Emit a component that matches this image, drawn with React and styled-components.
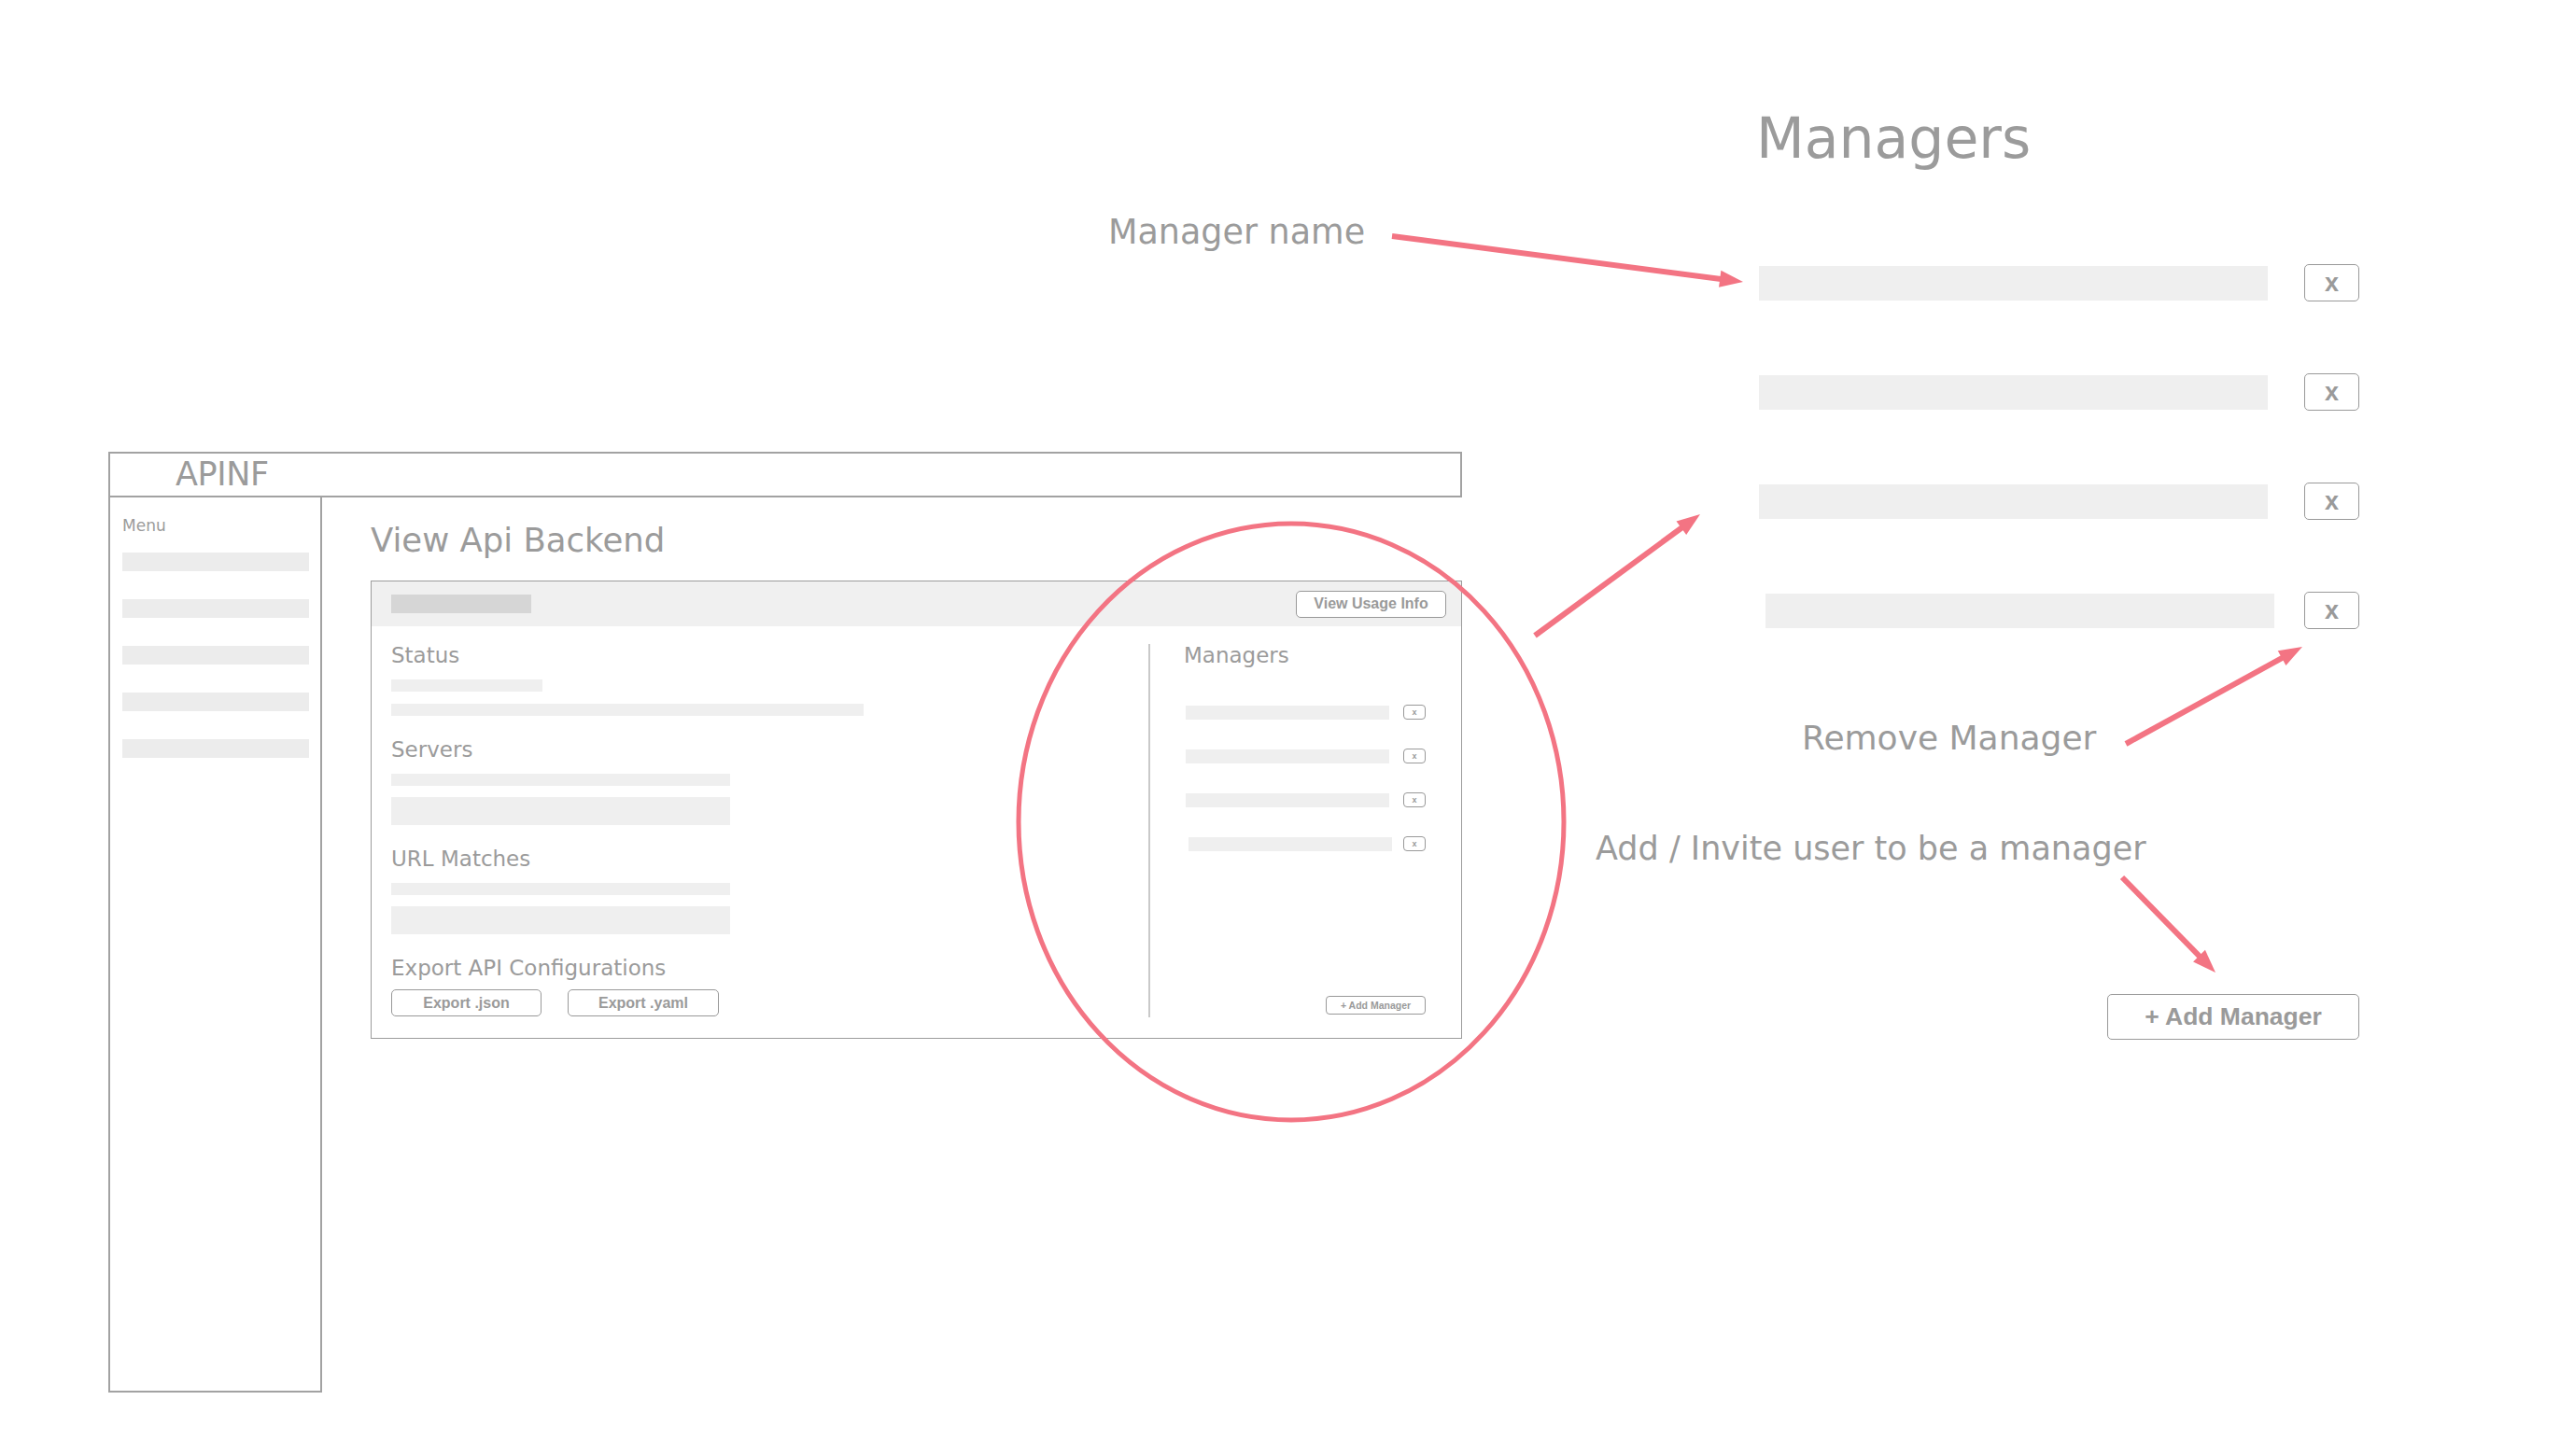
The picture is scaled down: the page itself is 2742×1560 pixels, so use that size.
import React from "react";
import styled, { createGlobalStyle } from "styled-components";

const PINK = "#f37483";
const INK = "#9b9b9b";
const LINE = "#a2a2a2";
const FILL = "#efefef";

const GlobalStyle = createGlobalStyle`
  html, body { margin: 0; padding: 0; background: #ffffff; }
  body { font-family: "DejaVu Sans", "Liberation Sans", sans-serif; color: ${INK}; }
  *, *::before, *::after { box-sizing: border-box; }
`;

const Canvas = styled.div`
  position: relative;
  width: 2742px;
  height: 1560px;
  overflow: hidden;
  display: flex;
  align-items: flex-start;
  padding-left: 116px;
  background: #fff;
`;

/* ---------- wireframe (left) ---------- */
const Wireframe = styled.section`
  width: 1450px;
  margin-top: 484px;
  display: flex;
  flex-direction: column;
`;

const TopBar = styled.header`
  height: 49px;
  border: 2px solid ${LINE};
  display: flex;
  align-items: center;
  padding-left: 70px;
`;

const Brand = styled.span`
  font-size: 35px;
  line-height: 45px;
  color: ${INK};
  letter-spacing: -0.4px;
`;

const Frame = styled.div`
  display: flex;
  align-items: flex-start;
`;

const Sidebar = styled.nav`
  width: 229px;
  height: 959px;
  border: 2px solid ${LINE};
  border-top: none;
  padding: 20px 0 0 13px;
  display: flex;
  flex-direction: column;
`;

const MenuLabel = styled.div`
  font-size: 17px;
  line-height: 20px;
  margin-bottom: 19px;
`;

const MenuItems = styled.div`
  display: flex;
  flex-direction: column;
  gap: 30px;
`;

const MenuItem = styled.div`
  width: 200px;
  height: 20px;
  background: #ececec;
`;

const Main = styled.main`
  flex: 1;
  padding: 26px 0 0 52px;
`;

const PageTitle = styled.h1`
  margin: 0 0 23px;
  font-weight: normal;
  font-size: 35.5px;
  line-height: 40px;
  color: ${INK};
`;

const Card = styled.div`
  border: 1px solid #9c9c9c;
  display: flex;
  flex-direction: column;
`;

const CardHead = styled.div`
  height: 48px;
  background: #f0f0f0;
  display: flex;
  align-items: center;
  justify-content: space-between;
  padding: 0 16px 0 21px;
`;

const HeadPlaceholder = styled.div`
  width: 150px;
  height: 20px;
  background: #d6d6d6;
`;

const Button = styled.button`
  width: ${(p) => p.$w}px;
  height: ${(p) => p.$h}px;
  padding: 0;
  background: #fff;
  border: 1px solid #999;
  border-radius: ${(p) => p.$r || 4}px;
  font-family: "Liberation Sans", Arial, sans-serif;
  font-weight: bold;
  font-size: ${(p) => p.$fs}px;
  color: #9a9a9a;
  display: flex;
  align-items: center;
  justify-content: center;
  white-space: nowrap;
  cursor: pointer;
`;

const CardBody = styled.div`
  display: flex;
  align-items: stretch;
`;

const LeftCol = styled.div`
  flex: 1;
  padding: 17px 0 23px 21px;
  display: flex;
  flex-direction: column;
`;

const Section = styled.div`
  display: flex;
  flex-direction: column;
  margin-top: ${(p) => (p.$first ? 0 : 22)}px;
`;

const SectionTitle = styled.h3`
  margin: 0 0 12px;
  font-weight: normal;
  font-size: 23px;
  line-height: 28px;
  color: ${INK};
`;

const Bars = styled.div`
  display: flex;
  flex-direction: column;
  gap: ${(p) => p.$gap}px;
`;

const Bar = styled.div`
  width: ${(p) => p.$w}px;
  height: ${(p) => p.$h}px;
  background: ${FILL};
`;

const ButtonRow = styled.div`
  display: flex;
  gap: 28px;
  margin-top: -3px;
`;

const Divider = styled.div`
  width: 2px;
  background: #c9c9c9;
  margin: 19px 0 22px;
`;

const RightCol = styled.div`
  width: 333px;
  padding: 17px 38px 25px 38px;
  display: flex;
  flex-direction: column;
`;

const ColTitle = styled.h3`
  margin: 0 0 0 -2px;
  font-weight: normal;
  font-size: 23px;
  line-height: 28px;
  color: ${INK};
`;

const MiniRows = styled.div`
  margin-top: 39px;
  display: flex;
  flex-direction: column;
  gap: 31px;
`;

const MiniRow = styled.div`
  height: 16px;
  display: flex;
  align-items: center;
  justify-content: space-between;
`;

const MiniBar = styled.div`
  width: 218px;
  height: 15px;
  background: ${FILL};
  margin-left: ${(p) => p.$offset || 0}px;
`;

const MiniAdd = styled(Button)`
  margin-top: auto;
  align-self: flex-end;
`;

/* ---------- detail panel (right) ---------- */
const Detail = styled.section`
  width: 643px;
  margin-left: 318px;
  margin-top: 113px;
  display: flex;
  flex-direction: column;
`;

const BigTitle = styled.h2`
  margin: 0 0 0 -3px;
  font-weight: normal;
  font-size: 60px;
  line-height: 70px;
  color: ${INK};
`;

const Rows = styled.div`
  margin-top: 100px;
  display: flex;
  flex-direction: column;
  gap: 77px;
`;

const Row = styled.div`
  height: 40px;
  display: flex;
  align-items: center;
  justify-content: space-between;
`;

const NameField = styled.div`
  width: 545px;
  height: 37px;
  background: ${FILL};
  margin-left: ${(p) => p.$offset || 0}px;
`;

const Note = styled.p`
  margin: ${(p) => p.$top}px 0 0 ${(p) => p.$left}px;
  font-size: ${(p) => p.$fs || 36}px;
  line-height: 42px;
  color: ${INK};
  white-space: nowrap;
`;

const AddButton = styled(Button)`
  margin-top: 135px;
  align-self: flex-end;
`;

/* ---------- annotation overlay ---------- */
const Overlay = styled.svg`
  position: absolute;
  left: 0;
  top: 0;
  pointer-events: none;
`;

const Callout = styled.div`
  position: absolute;
  left: ${(p) => p.$x}px;
  top: ${(p) => p.$y}px;
  font-size: 36.5px;
  line-height: 42px;
  color: ${INK};
  white-space: nowrap;
`;

function Arrow({ x1, y1, x2, y2 }) {
  const dx = x2 - x1;
  const dy = y2 - y1;
  const len = Math.hypot(dx, dy);
  const ux = dx / len;
  const uy = dy / len;
  const L = 25;
  const W = 9;
  const bx = x2 - ux * L;
  const by = y2 - uy * L;
  const px = -uy;
  const py = ux;
  const pts = `${x2},${y2} ${bx + px * W},${by + py * W} ${bx - px * W},${by - py * W}`;
  return (
    <g>
      <line x1={x1} y1={y1} x2={bx + ux * 3} y2={by + uy * 3} stroke={PINK} strokeWidth="6" />
      <polygon points={pts} fill={PINK} />
    </g>
  );
}

const arrows = [
  { x1: 1491, y1: 253, x2: 1867, y2: 302 },
  { x1: 1644, y1: 681, x2: 1821, y2: 551 },
  { x1: 2277, y1: 797, x2: 2466, y2: 693 },
  { x1: 2273, y1: 940, x2: 2373, y2: 1042 },
];

export default function App() {
  return (
    <>
      <GlobalStyle />
      <Canvas>
        <Wireframe>
          <TopBar>
            <Brand>APINF</Brand>
          </TopBar>
          <Frame>
            <Sidebar>
              <MenuLabel>Menu</MenuLabel>
              <MenuItems>
                {[0, 1, 2, 3, 4].map((i) => (
                  <MenuItem key={i} />
                ))}
              </MenuItems>
            </Sidebar>
            <Main>
              <PageTitle>View Api Backend</PageTitle>
              <Card>
                <CardHead>
                  <HeadPlaceholder />
                  <Button $w={161} $h={29} $fs={16} $r={5}>View Usage Info</Button>
                </CardHead>
                <CardBody>
                  <LeftCol>
                    <Section $first>
                      <SectionTitle>Status</SectionTitle>
                      <Bars $gap={13}>
                        <Bar $w={162} $h={13} />
                        <Bar $w={506} $h={13} />
                      </Bars>
                    </Section>
                    <Section>
                      <SectionTitle>Servers</SectionTitle>
                      <Bars $gap={12}>
                        <Bar $w={363} $h={13} />
                        <Bar $w={363} $h={30} />
                      </Bars>
                    </Section>
                    <Section>
                      <SectionTitle>URL Matches</SectionTitle>
                      <Bars $gap={12}>
                        <Bar $w={363} $h={13} />
                        <Bar $w={363} $h={30} />
                      </Bars>
                    </Section>
                    <Section>
                      <SectionTitle>Export API Configurations</SectionTitle>
                      <ButtonRow>
                        <Button $w={161} $h={29} $fs={16} $r={5}>Export .json</Button>
                        <Button $w={162} $h={29} $fs={16} $r={5}>Export .yaml</Button>
                      </ButtonRow>
                    </Section>
                  </LeftCol>
                  <Divider />
                  <RightCol>
                    <ColTitle>Managers</ColTitle>
                    <MiniRows>
                      {[0, 0, 0, 3].map((off, i) => (
                        <MiniRow key={i}>
                          <MiniBar $offset={off} />
                          <Button $w={24} $h={16} $fs={9} $r={4}>x</Button>
                        </MiniRow>
                      ))}
                    </MiniRows>
                    <MiniAdd $w={107} $h={20} $fs={10.5} $r={4}>+ Add Manager</MiniAdd>
                  </RightCol>
                </CardBody>
              </Card>
            </Main>
          </Frame>
        </Wireframe>

        <Detail>
          <BigTitle>Managers</BigTitle>
          <Rows>
            {[0, 0, 0, 7].map((off, i) => (
              <Row key={i}>
                <NameField $offset={off} />
                <Button $w={59} $h={40} $fs={27} $r={5}>x</Button>
              </Row>
            ))}
          </Rows>
          <Note $top={96} $left={46}>Remove Manager</Note>
          <Note $top={76} $left={-175} $fs={35}>Add / Invite user to be a manager</Note>
          <AddButton $w={270} $h={49} $fs={26.5} $r={5}>+ Add Manager</AddButton>
        </Detail>

        <Callout $x={1187} $y={228}>Manager name</Callout>

        <Overlay width="2742" height="1560" viewBox="0 0 2742 1560">
          <ellipse cx="1383" cy="880.5" rx="292" ry="319.5" fill="none" stroke={PINK} strokeWidth="5" />
          {arrows.map((a, i) => (
            <Arrow key={i} {...a} />
          ))}
        </Overlay>
      </Canvas>
    </>
  );
}
